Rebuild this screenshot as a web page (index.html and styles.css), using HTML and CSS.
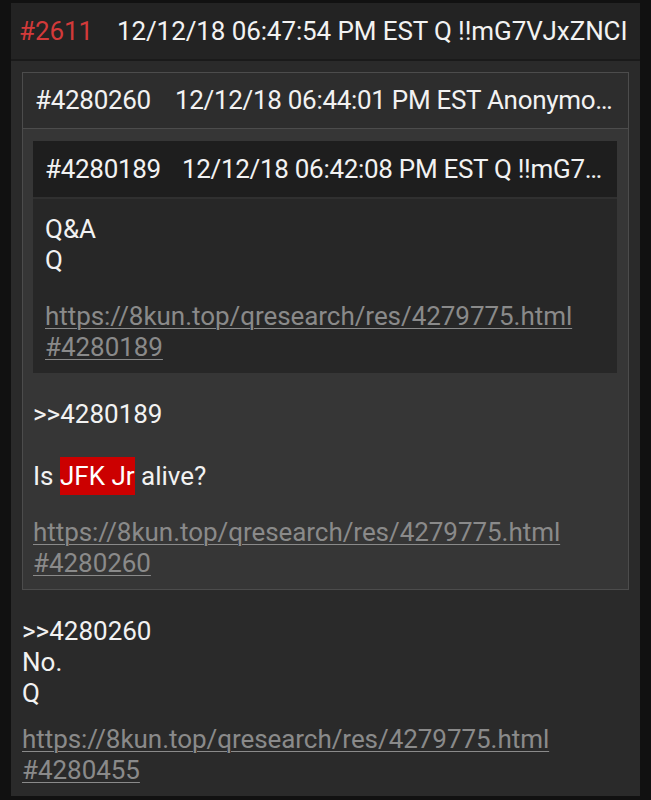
FILE: index.html
```html
<!DOCTYPE html>
<html lang="en">
<head>
  <meta charset="UTF-8">
  <title>Post #2611</title>
  <link rel="stylesheet" href="styles.css">
</head>
<body>

  <div class="post">
    <div class="post-head">
      <span class="post-no">#2611</span>
      <span class="post-meta">12/12/18 06:47:54 PM EST Q !!mG7VJxZNCI</span>
    </div>

    <div class="post-body">
      <div class="quote">
        <div class="quote-head">
          <span class="quote-no">#4280260</span>
          <span class="post-meta">12/12/18 06:44:01 PM EST Anonymous</span>
        </div>
        <div class="quote-body">

          <div class="quote inner">
            <div class="quote-head">
              <span class="quote-no">#4280189</span>
              <span class="post-meta">12/12/18 06:42:08 PM EST Q !!mG7VJxZNCI</span>
            </div>
            <div class="quote-body">
              <p class="text">Q&amp;A<br>Q</p>
              <a class="src-link gap-lg" href="#">https://8kun.top/qresearch/res/4279775.html<br>#4280189</a>
            </div>
          </div>

          <p class="text first">&gt;&gt;4280189<br><br>Is <span class="hl">JFK Jr</span> alive?</p>
          <a class="src-link gap-lg" href="#">https://8kun.top/qresearch/res/4279775.html<br>#4280260</a>
        </div>
      </div>

      <p class="text first">&gt;&gt;4280260<br>No.<br>Q</p>
      <a class="src-link" href="#">https://8kun.top/qresearch/res/4279775.html<br>#4280455</a>
    </div>
  </div>

</body>
</html>
```

FILE: styles.css
```css
body {
  margin: 0;
  padding: 3px 11px 5px;
  background-color: #111;
  font-family: Roboto, 'Noto Sans', sans-serif;
  font-size: 26px;
  line-height: 31px;
  color: #f2f2f2;
}

.post {
  background: #2a2a2a;
}

.post-head {
  display: flex;
  align-items: center;
  height: 56px;
  padding: 0 6px 0 8px;
  background: #232323;
  border-bottom: 2px solid #1a1a1a;
  white-space: nowrap;
  overflow: hidden;
  letter-spacing: -0.1px;
}

.post-no {
  color: #d23a3a;
  margin-right: 24px;
}

.post-meta {
  overflow: hidden;
  text-overflow: ellipsis;
}

.post-body {
  padding: 11px 11px 10px;
}

.quote {
  background: #363636;
  border: 1px solid #4c4c4c;
  padding-bottom: 10px;
}

.quote-head {
  display: flex;
  align-items: center;
  height: 55px;
  padding: 0 10px 0 12px;
  background: #2d2d2d;
  border-bottom: 1px solid #4c4c4c;
  white-space: nowrap;
  overflow: hidden;
  letter-spacing: -0.3px;
}

.quote-no {
  margin-right: 24px;
  flex-shrink: 0;
}

.quote-body {
  padding: 12px 11px 0 10px;
}

.quote.inner {
  background: #272727;
  border: none;
  padding-bottom: 10px;
}

.quote.inner .quote-head {
  height: 56px;
  background: #1e1e1e;
  border-bottom: 2px solid #303030;
  padding-right: 8px;
}

.quote.inner .quote-no {
  margin-right: 21px;
}

.quote.inner .quote-body {
  padding: 15px 12px 0;
}

.text {
  margin: 0;
}

.text.first {
  margin-top: 26px;
}

.quote-body .text.first {
  margin-top: 26px;
}

.hl {
  background: #cc0000;
  color: #fff;
  padding: 4px 0;
}

.src-link {
  display: block;
  margin-top: 15px;
  color: #8a8a8a;
  text-decoration: underline;
  text-decoration-thickness: 1px;
  text-underline-offset: 3px;
  letter-spacing: -0.05px;
}

.src-link.gap-lg {
  margin-top: 25px;
}
```
